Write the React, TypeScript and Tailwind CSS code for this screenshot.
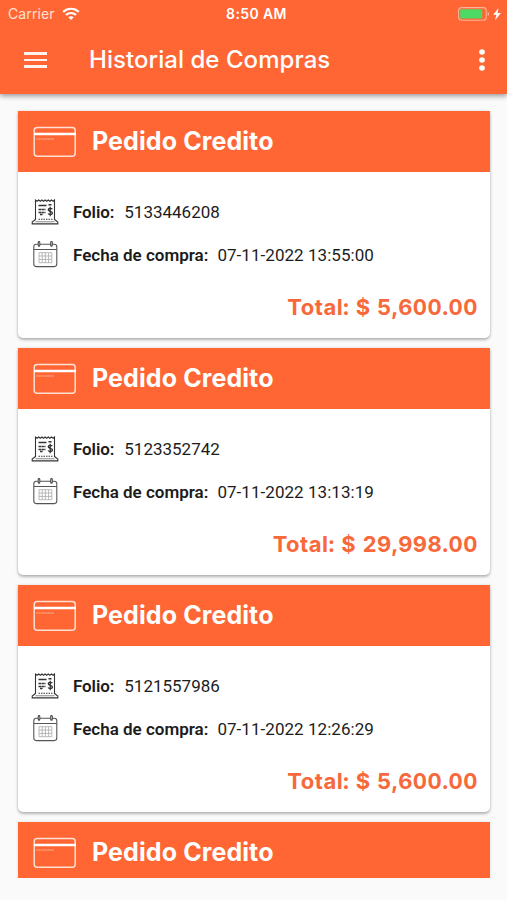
type Order = { folio: string; date: string; total: string };

const orders: Order[] = [
  { folio: "5133446208", date: "07-11-2022 13:55:00", total: "5,600.00" },
  { folio: "5123352742", date: "07-11-2022 13:13:19", total: "29,998.00" },
  { folio: "5121557986", date: "07-11-2022 12:26:29", total: "5,600.00" },
];

function WifiIcon() {
  return (
    <svg width="18" height="14" viewBox="0 0 18 14" fill="none" stroke="#fff" strokeWidth="2.200">
      <path d="M1.200 4.900C5.500.7 12.500.7 16.800 4.900" />
      <path d="M4 8C6.800 5.300 11.200 5.300 14 8" />
      <path d="M9 13 6.300 10.300C7.800 8.900 10.200 8.900 11.700 10.300Z" fill="#fff" stroke="none" />
    </svg>
  );
}

function BatteryIcon() {
  return (
    <svg width="44" height="14" viewBox="0 0 44 14">
      <rect x=".6" y=".6" width="27.600" height="12.600" rx="3" fill="none" stroke="#ffb59b" strokeWidth="1.100" />
      <rect x="2.200" y="2.200" width="22" height="9.400" rx="1" fill="#4cd964" />
      <path d="M29.700 4.900c1.800.5 1.800 3.500 0 4z" fill="#ffb59b" />
      <path d="M40.500 1 35.200 7.800h3.200L37 13.300 43 6h-3.500z" fill="#fff" />
    </svg>
  );
}

function CardIcon() {
  return (
    <svg className="shrink-0" width="44" height="32" viewBox="0 0 44 32" fill="none" stroke="#ffe0d4">
      <rect x="1.200" y="1.400" width="41" height="28.800" rx="3" strokeWidth="1.500" />
      <path d="M1 8h42" stroke="#fff" strokeWidth="2.600" />
      <path d="M3.500 13h17" stroke="#ffa382" strokeWidth="1.400" strokeDasharray="1.600 .6" />
    </svg>
  );
}

function ReceiptIcon() {
  return (
    <svg className="-mt-[1px]" width="28" height="28" viewBox="0 0 28 28" fill="none" stroke="#333" strokeWidth="1.100">
      <path d="M4.500 22V2l1.600 1.200L7.700 2l1.600 1.200L10.900 2l1.600 1.200L14.100 2l1.600 1.200L17.300 2l1.600 1.200L20.500 2l1.600 1.200L23.500 2v20" />
      <path d="M4.500 21.500 1.200 24v1.900h25.600V24l-3.300-2.500" />
      <path d="M4.500 23.800h19" stroke="#888" />
      <path d="M7.500 21.200h14" strokeDasharray="1.500 1" />
      <path d="M7.500 7.500h8M17.500 6.700h3" strokeWidth="1.500" />
      <path d="M7.500 11.500h7M7.500 14.500h7M9 16.500h3" strokeWidth="1.300" strokeDasharray="2.500 .4" />
      <path d="M21.300 11.200c-.7-1.200-4-1.300-4.100.5 0 1.900 4.300 1.300 4.300 3.400 0 1.900-3.600 1.700-4.500.4M19.200 8.700v9.500" strokeWidth="1.300" />
    </svg>
  );
}

function CalendarIcon() {
  return (
    <svg className="-mt-[3px]" width="28" height="28" viewBox="0 0 28 28" fill="none" stroke="#555" strokeWidth="1.100">
      <rect x="2.800" y="4.200" width="23" height="22.400" rx="2.500" />
      <path d="M2.800 9.500h23" />
      <path d="M8 2.200v3.200M20.500 2.200v3.200" stroke="#444" strokeWidth="2.600" strokeLinecap="round" />
      <path d="M8 2.300v3M20.500 2.300v3" stroke="#ccc" strokeWidth=".8" />
      <path d="M8 12.700h12.800v10H8zM8 16h12.800M8 19.400h12.800M11.200 12.700v10M14.400 12.700v10M17.600 12.700v10" stroke="#aaa" strokeWidth=".8" />
    </svg>
  );
}

function OrderTitle() {
  return (
    <div className="flex h-[61px] items-center bg-[#ff6633] pl-[15px] text-white">
      <CardIcon />
      <h2 className="ml-[15px] whitespace-nowrap font-['Inter',sans-serif] text-[25px] font-bold leading-none tracking-[0.1px]">
        Pedido Credito
      </h2>
    </div>
  );
}

function OrderCard({ folio, date, total }: Order) {
  return (
    <article className="h-[227px] shrink-0 overflow-hidden rounded-b-[5px] bg-white shadow-[0_2px_3px_rgba(0,0,0,0.26),0_0_3px_rgba(0,0,0,0.12)]">
      <OrderTitle />
      <div className="flex flex-col pt-[19px] font-['Roboto',sans-serif] text-[17px] text-[#1c1c1c]">
        <div className="flex h-[43px] items-center pl-[13px]">
          <ReceiptIcon />
          <b className="ml-[14px] font-semibold tracking-[-0.1px]">Folio:</b>
          <span className="ml-[10px]">{folio}</span>
        </div>
        <div className="flex h-[43px] items-center whitespace-nowrap pl-[13px]">
          <CalendarIcon />
          <b className="ml-[14px] font-semibold">Fecha de compra:</b>
          <span className="ml-[9px] tracking-[0.05px]">{date}</span>
        </div>
      </div>
      <p className="mt-[14px] pr-[12px] text-right font-['Inter',sans-serif] text-[22px] font-bold tabular-nums leading-[32px] tracking-[0.47px] text-[#f7683a]">
        Total: $ {total}
      </p>
    </article>
  );
}

export default function App() {
  return (
    <div className="flex h-[900px] w-[507px] flex-col overflow-hidden bg-[#fafafa]">
      <header className="z-10 h-[94px] shrink-0 bg-[#ff6633] font-['Inter',sans-serif] text-white shadow-[0_2px_5px_rgba(0,0,0,0.4)]">
        <div className="grid h-[27px] grid-cols-3 items-center pl-[8px] pr-[5px] text-[14px]">
          <div className="flex items-center gap-[7px] text-[#ffe0d4]">
            <span className="tracking-[0.1px]">Carrier</span>
            <WifiIcon />
          </div>
          <span className="ml-[3px] whitespace-nowrap text-center text-[14px] font-semibold tracking-[0.400px]">8:50 AM</span>
          <div className="flex justify-end"><BatteryIcon /></div>
        </div>
        <div className="flex h-[66px] items-center pl-[24px] pr-[22px]">
          <button aria-label="Menu" className="flex w-[23px] flex-col gap-[4px]">
            <i className="h-[2.500px] bg-[#fff2ec]" />
            <i className="h-[2.500px] bg-[#fff2ec]" />
            <i className="h-[2.500px] bg-[#fff2ec]" />
          </button>
          <h1 className="ml-[42px] flex-1 whitespace-nowrap text-[24px] font-medium leading-none tracking-[0.05px]">Historial de Compras</h1>
          <svg width="6" height="22" viewBox="0 0 6 22" fill="#fff">
            <circle cx="3" cy="3" r="2.800" />
            <circle cx="3" cy="11" r="2.800" />
            <circle cx="3" cy="19" r="2.800" />
          </svg>
        </div>
      </header>
      <main className="mt-[9px] flex h-[775px] shrink-0 flex-col gap-[10px] overflow-hidden pl-[18px] pr-[17px] pt-[8px]">
        {orders.map((order) => (
          <OrderCard key={order.folio} {...order} />
        ))}
        <article className="h-[61px] shrink-0 shadow-[0_0_3px_rgba(0,0,0,0.12)]">
          <OrderTitle />
        </article>
      </main>
    </div>
  );
}
